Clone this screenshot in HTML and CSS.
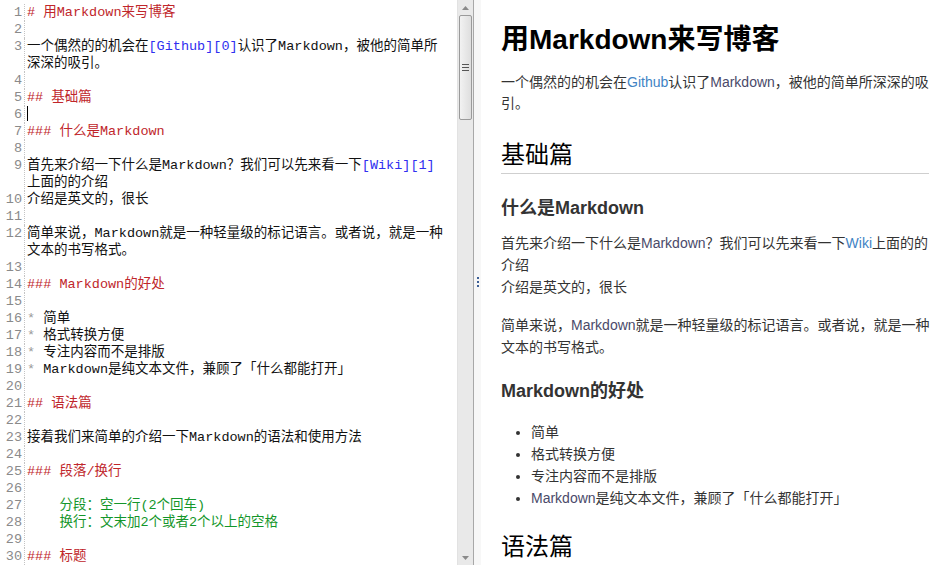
FILE: index.html
```html
<!DOCTYPE html>
<html lang="zh-CN">
<head>
<meta charset="utf-8">
<title>用Markdown来写博客</title>
<link rel="stylesheet" href="styles.css">
</head>
<body>
<div class="app">
  <section class="editor">
    <div class="lines">
      <div class="row"><span class="num">1</span><span class="code h"># 用Markdown来写博客</span></div>
      <div class="row"><span class="num">2</span><span class="code"></span></div>
      <div class="row"><span class="num">3</span><span class="code">一个偶然的的机会在<span class="lk">[Github][0]</span>认识了Markdown，被他的简单所<br>深深的吸引。</span></div>
      <div class="row"><span class="num">4</span><span class="code"></span></div>
      <div class="row"><span class="num">5</span><span class="code h">## 基础篇</span></div>
      <div class="row"><span class="num">6</span><span class="code"><span class="cursor"></span></span></div>
      <div class="row"><span class="num">7</span><span class="code h">### 什么是Markdown</span></div>
      <div class="row"><span class="num">8</span><span class="code"></span></div>
      <div class="row"><span class="num">9</span><span class="code">首先来介绍一下什么是Markdown？我们可以先来看一下<span class="lk">[Wiki][1]</span><br>上面的的介绍</span></div>
      <div class="row"><span class="num">10</span><span class="code">介绍是英文的，很长</span></div>
      <div class="row"><span class="num">11</span><span class="code"></span></div>
      <div class="row"><span class="num">12</span><span class="code">简单来说，Markdown就是一种轻量级的标记语言。或者说，就是一种<br>文本的书写格式。</span></div>
      <div class="row"><span class="num">13</span><span class="code"></span></div>
      <div class="row"><span class="num">14</span><span class="code h">### Markdown的好处</span></div>
      <div class="row"><span class="num">15</span><span class="code"></span></div>
      <div class="row"><span class="num">16</span><span class="code"><span class="bl">*</span> 简单</span></div>
      <div class="row"><span class="num">17</span><span class="code"><span class="bl">*</span> 格式转换方便</span></div>
      <div class="row"><span class="num">18</span><span class="code"><span class="bl">*</span> 专注内容而不是排版</span></div>
      <div class="row"><span class="num">19</span><span class="code"><span class="bl">*</span> Markdown是纯文本文件，兼顾了「什么都能打开」</span></div>
      <div class="row"><span class="num">20</span><span class="code"></span></div>
      <div class="row"><span class="num">21</span><span class="code h">## 语法篇</span></div>
      <div class="row"><span class="num">22</span><span class="code"></span></div>
      <div class="row"><span class="num">23</span><span class="code">接着我们来简单的介绍一下Markdown的语法和使用方法</span></div>
      <div class="row"><span class="num">24</span><span class="code"></span></div>
      <div class="row"><span class="num">25</span><span class="code h">### 段落/换行</span></div>
      <div class="row"><span class="num">26</span><span class="code"></span></div>
      <div class="row"><span class="num">27</span><span class="code cd">    分段：空一行(2个回车)</span></div>
      <div class="row"><span class="num">28</span><span class="code cd">    换行：文末加2个或者2个以上的空格</span></div>
      <div class="row"><span class="num">29</span><span class="code"></span></div>
      <div class="row"><span class="num">30</span><span class="code h">### 标题</span></div>
      <div class="row"><span class="num"></span><span class="code"></span></div>
    </div>
  </section>
  <div class="scrollbar">
    <div class="sb-btn"><svg width="7" height="4" viewBox="0 0 7 4"><path d="M0 4 L3.5 0 L7 4Z" fill="#8a8a8a"/></svg></div>
    <div class="sb-track">
      <div class="sb-thumb"><span class="grip"></span></div>
    </div>
    <div class="sb-btn"><svg width="7" height="4" viewBox="0 0 7 4"><path d="M0 0 L7 0 L3.5 4Z" fill="#8a8a8a"/></svg></div>
  </div>
  <div class="splitter"><span class="dots"></span></div>
  <section class="preview">
    <h1>用<span class="lat">Markdown</span>来写博客</h1>
    <p>一个偶然的的机会在<a href="#">Github</a>认识了<span class="lat">Markdown</span>，被他的简单所深深的吸引。</p>
    <h2>基础篇</h2>
    <h3>什么是<span class="lat">Markdown</span></h3>
    <p>首先来介绍一下什么是<span class="lat">Markdown</span>？我们可以先来看一下<a href="#">Wiki</a>上面的的介绍<br>介绍是英文的，很长</p>
    <p>简单来说，<span class="lat">Markdown</span>就是一种轻量级的标记语言。或者说，就是一种文本的书写格式。</p>
    <h3><span class="lat">Markdown</span>的好处</h3>
    <ul>
      <li>简单</li>
      <li>格式转换方便</li>
      <li>专注内容而不是排版</li>
      <li><span class="lat">Markdown</span>是纯文本文件，兼顾了「什么都能打开」</li>
    </ul>
    <h2>语法篇</h2>
  </section>
</div>
</body>
</html>
```

FILE: styles.css
```css
html, body {
  margin: 0;
  padding: 0;
  background: #fff;
}
.app {
  display: flex;
  width: 947px;
  height: 565px;
  overflow: hidden;
}
.editor {
  flex: 0 0 457px;
  overflow: hidden;
  padding-top: 4px;
  font-family: "Liberation Mono", "Noto Sans CJK SC", monospace;
  font-size: 13.5px;
  color: #111;
}
.row {
  display: grid;
  grid-template-columns: 25px 1fr;
  line-height: 17px;
}
.num {
  text-align: right;
  padding-right: 2px;
  color: #8a8a8a;
  border-right: 1px dotted #c4c4c4;
  font-size: 13.5px;
}
.code {
  padding-left: 2px;
  white-space: pre;
  min-height: 17px;
}
.h { color: #c0262b; }
.lk { color: #2f2ff0; }
.bl { color: #999; }
.cd { color: #14962a; }
.cursor {
  display: inline-block;
  width: 1px;
  height: 15px;
  background: #000;
  vertical-align: -3px;
}
.scrollbar {
  flex: 0 0 15px;
  display: flex;
  flex-direction: column;
  background: #e9e9e9;
  border-left: 1px solid #e2e2e2;
}
.sb-btn {
  height: 15px;
  display: flex;
  align-items: center;
  justify-content: center;
}
.sb-track {
  flex: 1;
  padding: 0 1px;
}
.sb-thumb {
  height: 103px;
  border: 1px solid #9a9a9a;
  border-radius: 2px;
  background: linear-gradient(to right, #f2f2f2, #dedede);
  display: flex;
  align-items: center;
  justify-content: center;
}
.grip {
  width: 7px;
  height: 5px;
  border-top: 1px solid #555;
  border-bottom: 1px solid #555;
  position: relative;
}
.grip::after {
  content: "";
  position: absolute;
  left: 0;
  right: 0;
  top: 2px;
  border-top: 1px solid #555;
}
.splitter {
  flex: 0 0 7px;
  border-left: 1px solid #a8a8a8;
  background: #f7f7f7;
  display: flex;
  align-items: center;
  justify-content: center;
}
.dots {
  width: 2px;
  height: 12px;
  background: repeating-linear-gradient(to bottom, #3d5f96 0 2px, transparent 2px 4px);
}
.preview {
  flex: 1;
  padding: 0 13px 0 20px;
  font-family: "Liberation Sans", "Noto Sans CJK SC", sans-serif;
  font-size: 14px;
  color: #333;
  overflow: hidden;
}
.preview h1 {
  margin: 22px 0 0;
  font-size: 28px;
  line-height: 36px;
  font-weight: bold;
  color: #000;
}
.preview p {
  margin: 14px 0 0;
  line-height: 22px;
}
.preview h1 + p {
  line-height: 21px;
}
.preview h2 {
  margin: 26px 5px 0 0;
  font-size: 24px;
  line-height: 30px;
  font-weight: normal;
  color: #000;
  padding-bottom: 3px;
  border-bottom: 1px solid #cfcfcf;
}
.preview h3 {
  margin: 22px 0 0;
  font-size: 18px;
  line-height: 24px;
  font-weight: bold;
  color: #333;
}
.preview p + h3 {
  margin-top: 21px;
}
.preview h3 + p {
  margin-top: 12px;
}
.preview p + p {
  margin-top: 16px;
}
.preview ul {
  margin: 18px 0 0;
  padding-left: 30px;
  line-height: 22px;
}
.preview ul + h2 {
  margin-top: 23px;
  border-bottom: none;
}
.preview a {
  color: #4183c4;
  text-decoration: none;
}
.lat {
  color: #4a4a6a;
}
.preview h1 .lat, .preview h3 .lat {
  color: inherit;
}
```
